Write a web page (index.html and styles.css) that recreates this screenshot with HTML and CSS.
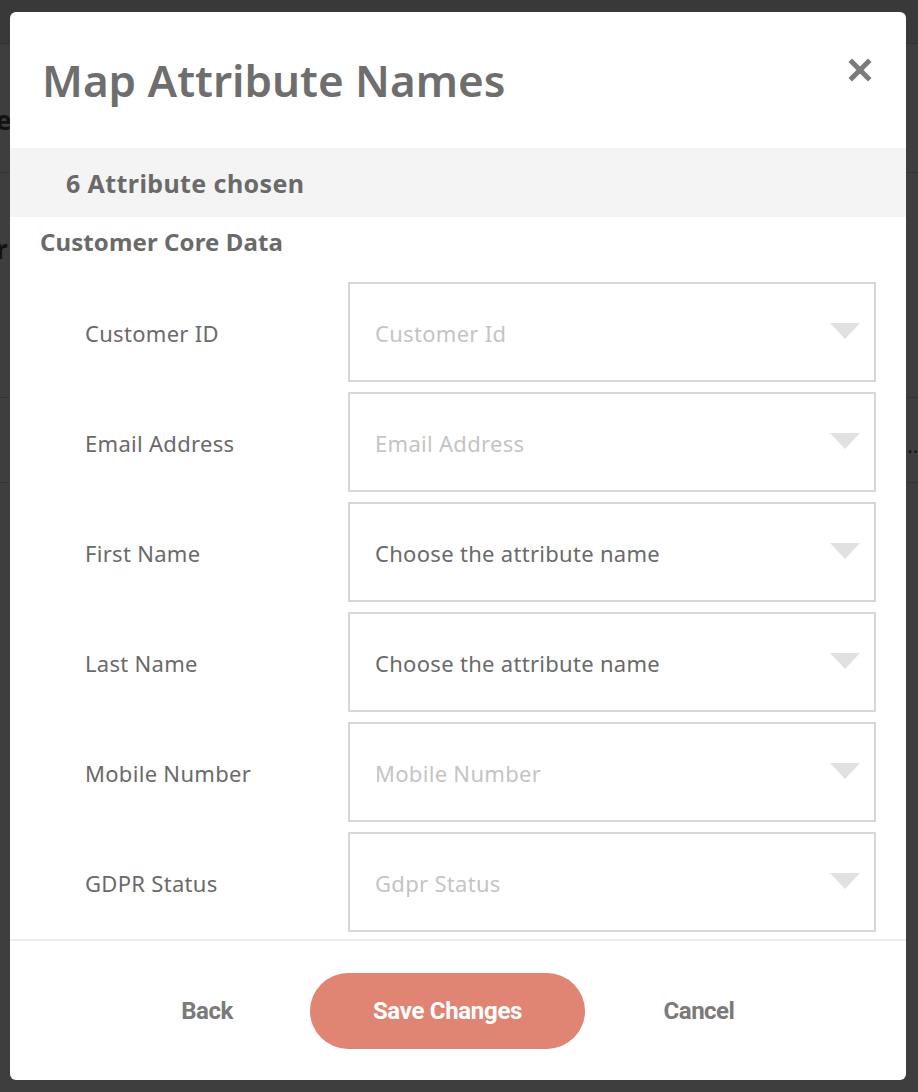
FILE: index.html
```html
<!DOCTYPE html>
<html lang="en">
<head>
    <meta charset="UTF-8">
    <meta name="viewport" content="width=device-width, initial-scale=1.0">
    <title>Map Attribute Names</title>
    <link rel="stylesheet" href="styles.css">
</head>
<body>
    <div class="backdrop">
        <div class="bg-row bg-row-top"></div>
        <div class="bg-row"><span class="bg-letter">e</span></div>
        <div class="bg-row"><span class="bg-letter">r</span></div>
        <div class="bg-row bg-row-right"><span class="bg-dots">...</span></div>
    </div>

    <div class="modal">
        <div class="modal-header">
            <h1>Map Attribute Names</h1>
            <button class="close-btn" aria-label="Close">
                <svg width="24" height="24" viewBox="0 0 24 24">
                    <path d="M4 4 L20 20 M20 4 L4 20" stroke="#7b7b7b" stroke-width="5" stroke-linecap="square"/>
                </svg>
            </button>
        </div>

        <div class="chosen-bar">6 Attribute chosen</div>

        <h2 class="section-title">Customer Core Data</h2>

        <div class="attr-list">
            <div class="attr-row">
                <label>Customer ID</label>
                <div class="select placeholder">Customer Id<span class="caret"></span></div>
            </div>
            <div class="attr-row">
                <label>Email Address</label>
                <div class="select placeholder">Email Address<span class="caret"></span></div>
            </div>
            <div class="attr-row">
                <label>First Name</label>
                <div class="select">Choose the attribute name<span class="caret"></span></div>
            </div>
            <div class="attr-row">
                <label>Last Name</label>
                <div class="select">Choose the attribute name<span class="caret"></span></div>
            </div>
            <div class="attr-row">
                <label>Mobile Number</label>
                <div class="select placeholder">Mobile Number<span class="caret"></span></div>
            </div>
            <div class="attr-row">
                <label>GDPR Status</label>
                <div class="select placeholder">Gdpr Status<span class="caret"></span></div>
            </div>
        </div>

        <div class="modal-footer">
            <button class="link-btn">Back</button>
            <button class="save-btn">Save Changes</button>
            <button class="link-btn">Cancel</button>
        </div>
    </div>
</body>
</html>
```

FILE: styles.css
```css
body {
    margin: 0;
    background-color: #3e3e3e;
    font-family: "Noto Sans", "Open Sans", sans-serif;
    height: 1092px;
    overflow: hidden;
    position: relative;
}
.backdrop {
    position: absolute;
    inset: 0;
}
.bg-row {
    height: 128px;
    border-top: 1px solid #333;
    position: relative;
}
.bg-row-top {
    height: 43px;
    background-color: #393939;
    border-top: none;
}
.bg-row-right {
    margin-top: 96px;
    height: 84px;
    border-bottom: 1px solid #333;
}
.bg-letter {
    position: absolute;
    left: -4px;
    top: 58px;
    font-size: 26px;
    font-weight: bold;
    color: #111;
}
.bg-dots {
    position: absolute;
    right: 0;
    top: 34px;
    font-size: 20px;
    color: #111;
}
.modal {
    position: absolute;
    left: 10px;
    top: 12px;
    width: 896px;
    height: 1068px;
    background-color: #fff;
    border-radius: 6px;
    display: flex;
    flex-direction: column;
    overflow: hidden;
}
.modal-header {
    height: 136px;
    display: flex;
    justify-content: space-between;
    align-items: center;
    padding: 0 34px 0 32px;
    box-sizing: border-box;
}
.modal-header h1 {
    margin: 0;
    font-size: 44px;
    font-weight: 600;
    color: #6e6e6e;
}
.close-btn {
    background: none;
    border: none;
    padding: 0;
    margin-bottom: 18px;
    cursor: pointer;
}
.chosen-bar {
    height: 69px;
    background-color: #f4f4f4;
    display: flex;
    align-items: center;
    padding-left: 56px;
    font-size: 25px;
    font-weight: bold;
    letter-spacing: 0.4px;
    color: #6a6a6a;
}
.section-title {
    margin: 8px 0 0 30px;
    font-size: 24px;
    font-weight: bold;
    letter-spacing: 0.1px;
    color: #6a6a6a;
}
.attr-list {
    margin-top: 24px;
    padding: 0 30px 0 75px;
    display: flex;
    flex-direction: column;
    gap: 10px;
}
.attr-row {
    display: grid;
    grid-template-columns: 263px 1fr;
    align-items: center;
}
.attr-row label {
    font-size: 22px;
    letter-spacing: 0.3px;
    color: #6a6a6a;
    padding-top: 1px;
}
.select {
    height: 100px;
    box-sizing: border-box;
    border: 2px solid #d7d7d7;
    display: flex;
    align-items: center;
    justify-content: space-between;
    padding: 1px 14px 0 25px;
    font-size: 22px;
    letter-spacing: 0.3px;
    color: #6a6a6a;
}
.select.placeholder {
    color: #c4c4c4;
}
.caret {
    width: 0;
    height: 0;
    margin-top: -3px;
    border-left: 15px solid transparent;
    border-right: 15px solid transparent;
    border-top: 16px solid #e1e1e1;
}
.modal-footer {
    margin-top: auto;
    height: 141px;
    border-top: 2px solid #ececf0;
    display: flex;
    align-items: center;
    padding-left: 107px;
    box-sizing: border-box;
}
.link-btn {
    background: none;
    border: none;
    font-family: Roboto, sans-serif;
    font-size: 24px;
    font-weight: bold;
    color: #7a7a7a;
    letter-spacing: -0.5px;
    cursor: pointer;
    width: 180px;
    padding: 0;
}
.save-btn {
    width: 275px;
    height: 76px;
    border: none;
    border-radius: 38px;
    background-color: #e08473;
    color: #fff;
    font-family: Roboto, sans-serif;
    font-size: 24px;
    font-weight: bold;
    letter-spacing: -0.3px;
    cursor: pointer;
    margin: 0 24px 0 13px;
}
```
